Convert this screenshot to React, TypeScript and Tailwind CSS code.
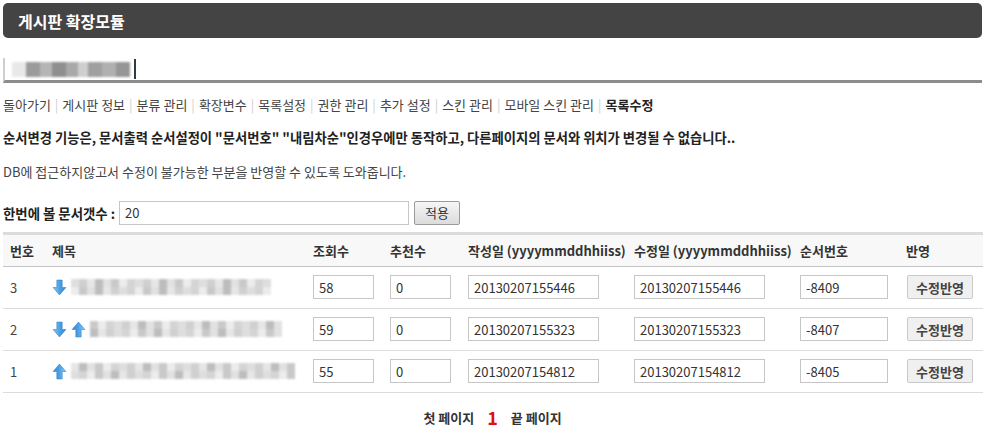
import React from "react";

const navItems = [
  "돌아가기",
  "게시판 정보",
  "분류 관리",
  "확장변수",
  "목록설정",
  "권한 관리",
  "추가 설정",
  "스킨 관리",
  "모바일 스킨 관리",
  "목록수정",
];

const rows = [
  { no: 3, down: true, up: false, hits: "58", votes: "0", reg: "20130207155446", upd: "20130207155446", order: "-8409", blur: 200 },
  { no: 2, down: true, up: true, hits: "59", votes: "0", reg: "20130207155323", upd: "20130207155323", order: "-8407", blur: 195 },
  { no: 1, down: false, up: true, hits: "55", votes: "0", reg: "20130207154812", upd: "20130207154812", order: "-8405", blur: 225 },
];

// mosaic shades used for the obscured titles
const shades = [
  "bg-[#d4d4d4]",
  "bg-[#e6e6e6]",
  "bg-[#c9c9c9]",
  "bg-[#dedede]",
  "bg-[#bdbdbd]",
  "bg-[#ececec]",
  "bg-[#d0d0d0]",
  "bg-[#e1e1e1]",
];

function Mosaic({ width, seed }: { width: number; seed: number }) {
  const cells = Math.floor(width / 8);
  return (
    <div className="flex h-[16px] blur-[1px]">
      {Array.from({ length: cells }).map((_, i) => (
        <div key={i} className="flex w-[8px] flex-col">
          <div className={`h-[8px] ${shades[(i * 3 + seed) % shades.length]}`} />
          <div className={`h-[8px] ${shades[(i * 5 + seed + 2) % shades.length]}`} />
        </div>
      ))}
    </div>
  );
}

function Arrow({ up }: { up?: boolean }) {
  return (
    <svg width="15" height="17" viewBox="0 0 14 16" className={up ? "rotate-180" : ""}>
      <defs>
        <linearGradient id="arr" x1="0" y1="0" x2="1" y2="0">
          <stop offset="0" stopColor="#8ccaf4" />
          <stop offset="0.5" stopColor="#4ea2e4" />
          <stop offset="1" stopColor="#3384d0" />
        </linearGradient>
      </defs>
      <path d="M4.5 1 H9.5 V8 H13 L7 15 L1 8 H4.5 Z" fill="url(#arr)" stroke="#3a88cf" strokeWidth="0.6" />
    </svg>
  );
}

function Field({ value, w }: { value: string; w: string }) {
  return (
    <input
      readOnly
      value={value}
      className={`${w} h-[24px] border border-[#c6c6c6] bg-white px-[5px] text-[13px] text-[#333] outline-none`}
    />
  );
}

export default function App() {
  return (
    <div className="min-h-[438px] bg-white px-[3px] pt-[3px] text-[#333] [font-family:'Noto_Sans_CJK_KR','Noto_Sans',sans-serif]">
      <div className="flex h-[35px] items-center rounded-[5px] bg-[#444] pl-[15px] text-[16px] font-bold text-white">
        게시판 확장모듈
      </div>

      <div className="mt-[20px] flex h-[25px] items-center border-b-[3px] border-l-[2px] border-[#8c8c8c] border-l-[#cfcfcf]">
        <div className="ml-[7px] w-[118px]">
          <div className="flex h-[15px] blur-[1px]">
            <div className="w-[14px] bg-[#e8e8e8]" />
            <div className="w-[14px] bg-[#9b9b9b]" />
            <div className="w-[12px] bg-[#b5b5b5]" />
            <div className="w-[14px] bg-[#8f8f8f]" />
            <div className="w-[12px] bg-[#a9a9a9]" />
            <div className="w-[10px] bg-[#cfcfcf]" />
            <div className="w-[14px] bg-[#a0a0a0]" />
            <div className="w-[14px] bg-[#b0b0b0]" />
            <div className="w-[14px] bg-[#969696]" />
          </div>
        </div>
        <div className="ml-[4px] h-[20px] w-[2px] bg-[#2e3b4a]" />
      </div>

      <div className="mt-[12px] flex items-center text-[13px] text-[#444]">
        {navItems.map((item, i) => (
          <React.Fragment key={item}>
            {i > 0 && <span className="px-[4px] text-[#cfcfcf]">|</span>}
            <span className={i === navItems.length - 1 ? "font-bold text-[#222]" : ""}>{item}</span>
          </React.Fragment>
        ))}
      </div>

      <p className="mt-[13px] text-[13.3px] font-bold text-[#222]">
        순서변경 기능은, 문서출력 순서설정이 "문서번호" "내림차순"인경우에만 동작하고, 다른페이지의 문서와 위치가 변경될 수 없습니다..
      </p>

      <p className="mt-[15px] text-[13px] text-[#444]">
        DB에 접근하지않고서 수정이 불가능한 부분을 반영할 수 있도록 도와줍니다.
      </p>

      <div className="mt-[19px] flex items-center">
        <span className="text-[13.4px] font-bold text-[#222]">한번에 볼 문서갯수 :</span>
        <input
          readOnly
          value="20"
          className="ml-[4px] h-[24px] w-[290px] border border-[#c6c6c6] px-[5px] text-[13px] text-[#333] outline-none"
        />
        <button className="ml-[5px] h-[24px] w-[46px] rounded-[2px] border border-[#9a9a9a] bg-gradient-to-b from-[#f6f6f6] to-[#dcdcdc] text-[13px] text-[#333]">
          적용
        </button>
      </div>

      <table className="mt-[7px] w-[980px] table-fixed border-collapse text-[13px]">
        <colgroup>
          <col className="w-[41px]" />
          <col className="w-[261px]" />
          <col className="w-[77px]" />
          <col className="w-[78px]" />
          <col className="w-[166px]" />
          <col className="w-[166px]" />
          <col className="w-[106px]" />
          <col className="w-[85px]" />
        </colgroup>
        <thead>
          <tr className="h-[33px] border-t-[3px] border-b border-t-[#dcdcdc] border-b-[#c4c4c4] bg-[#f8f8f8] text-left text-[#333]">
            <th className="pl-[7px] font-semibold">번호</th>
            <th className="pl-[8px] font-semibold">제목</th>
            <th className="pl-[8px] font-semibold">조회수</th>
            <th className="pl-[8px] font-semibold">추천수</th>
            <th className="pl-[8px] font-semibold">작성일 (yyyymmddhhiiss)</th>
            <th className="pl-[8px] font-semibold">수정일 (yyyymmddhhiiss)</th>
            <th className="pl-[8px] font-semibold">순서번호</th>
            <th className="pl-[8px] font-semibold">반영</th>
          </tr>
        </thead>
        <tbody>
          {rows.map((r) => (
            <tr key={r.no} className="h-[42px] border-b border-[#dcdcdc]">
              <td className="pl-[7px] text-[#444]">{r.no}</td>
              <td className="pl-[8px]">
                <div className="flex items-center gap-[4px]">
                  {r.down && <Arrow />}
                  {r.up && <Arrow up />}
                  <Mosaic width={r.blur} seed={r.no} />
                </div>
              </td>
              <td className="pl-[8px]">
                <Field value={r.hits} w="w-[61px]" />
              </td>
              <td className="pl-[8px]">
                <Field value={r.votes} w="w-[61px]" />
              </td>
              <td className="pl-[8px]">
                <Field value={r.reg} w="w-[131px]" />
              </td>
              <td className="pl-[8px]">
                <Field value={r.upd} w="w-[131px]" />
              </td>
              <td className="pl-[8px]">
                <Field value={r.order} w="w-[88px]" />
              </td>
              <td className="pl-[9px]">
                <button className="h-[24px] w-[66px] rounded-[2px] border border-[#c9c9c9] bg-[#f0f0f0] text-[13px] font-bold text-[#444]">
                  수정반영
                </button>
              </td>
            </tr>
          ))}
        </tbody>
      </table>

      <div className="mt-[11px] flex items-center justify-center gap-[13px] text-[13px] font-bold text-[#333]">
        <span>첫 페이지</span>
        <span className="text-[18px] text-[#e01010]">1</span>
        <span>끝 페이지</span>
      </div>
    </div>
  );
}
